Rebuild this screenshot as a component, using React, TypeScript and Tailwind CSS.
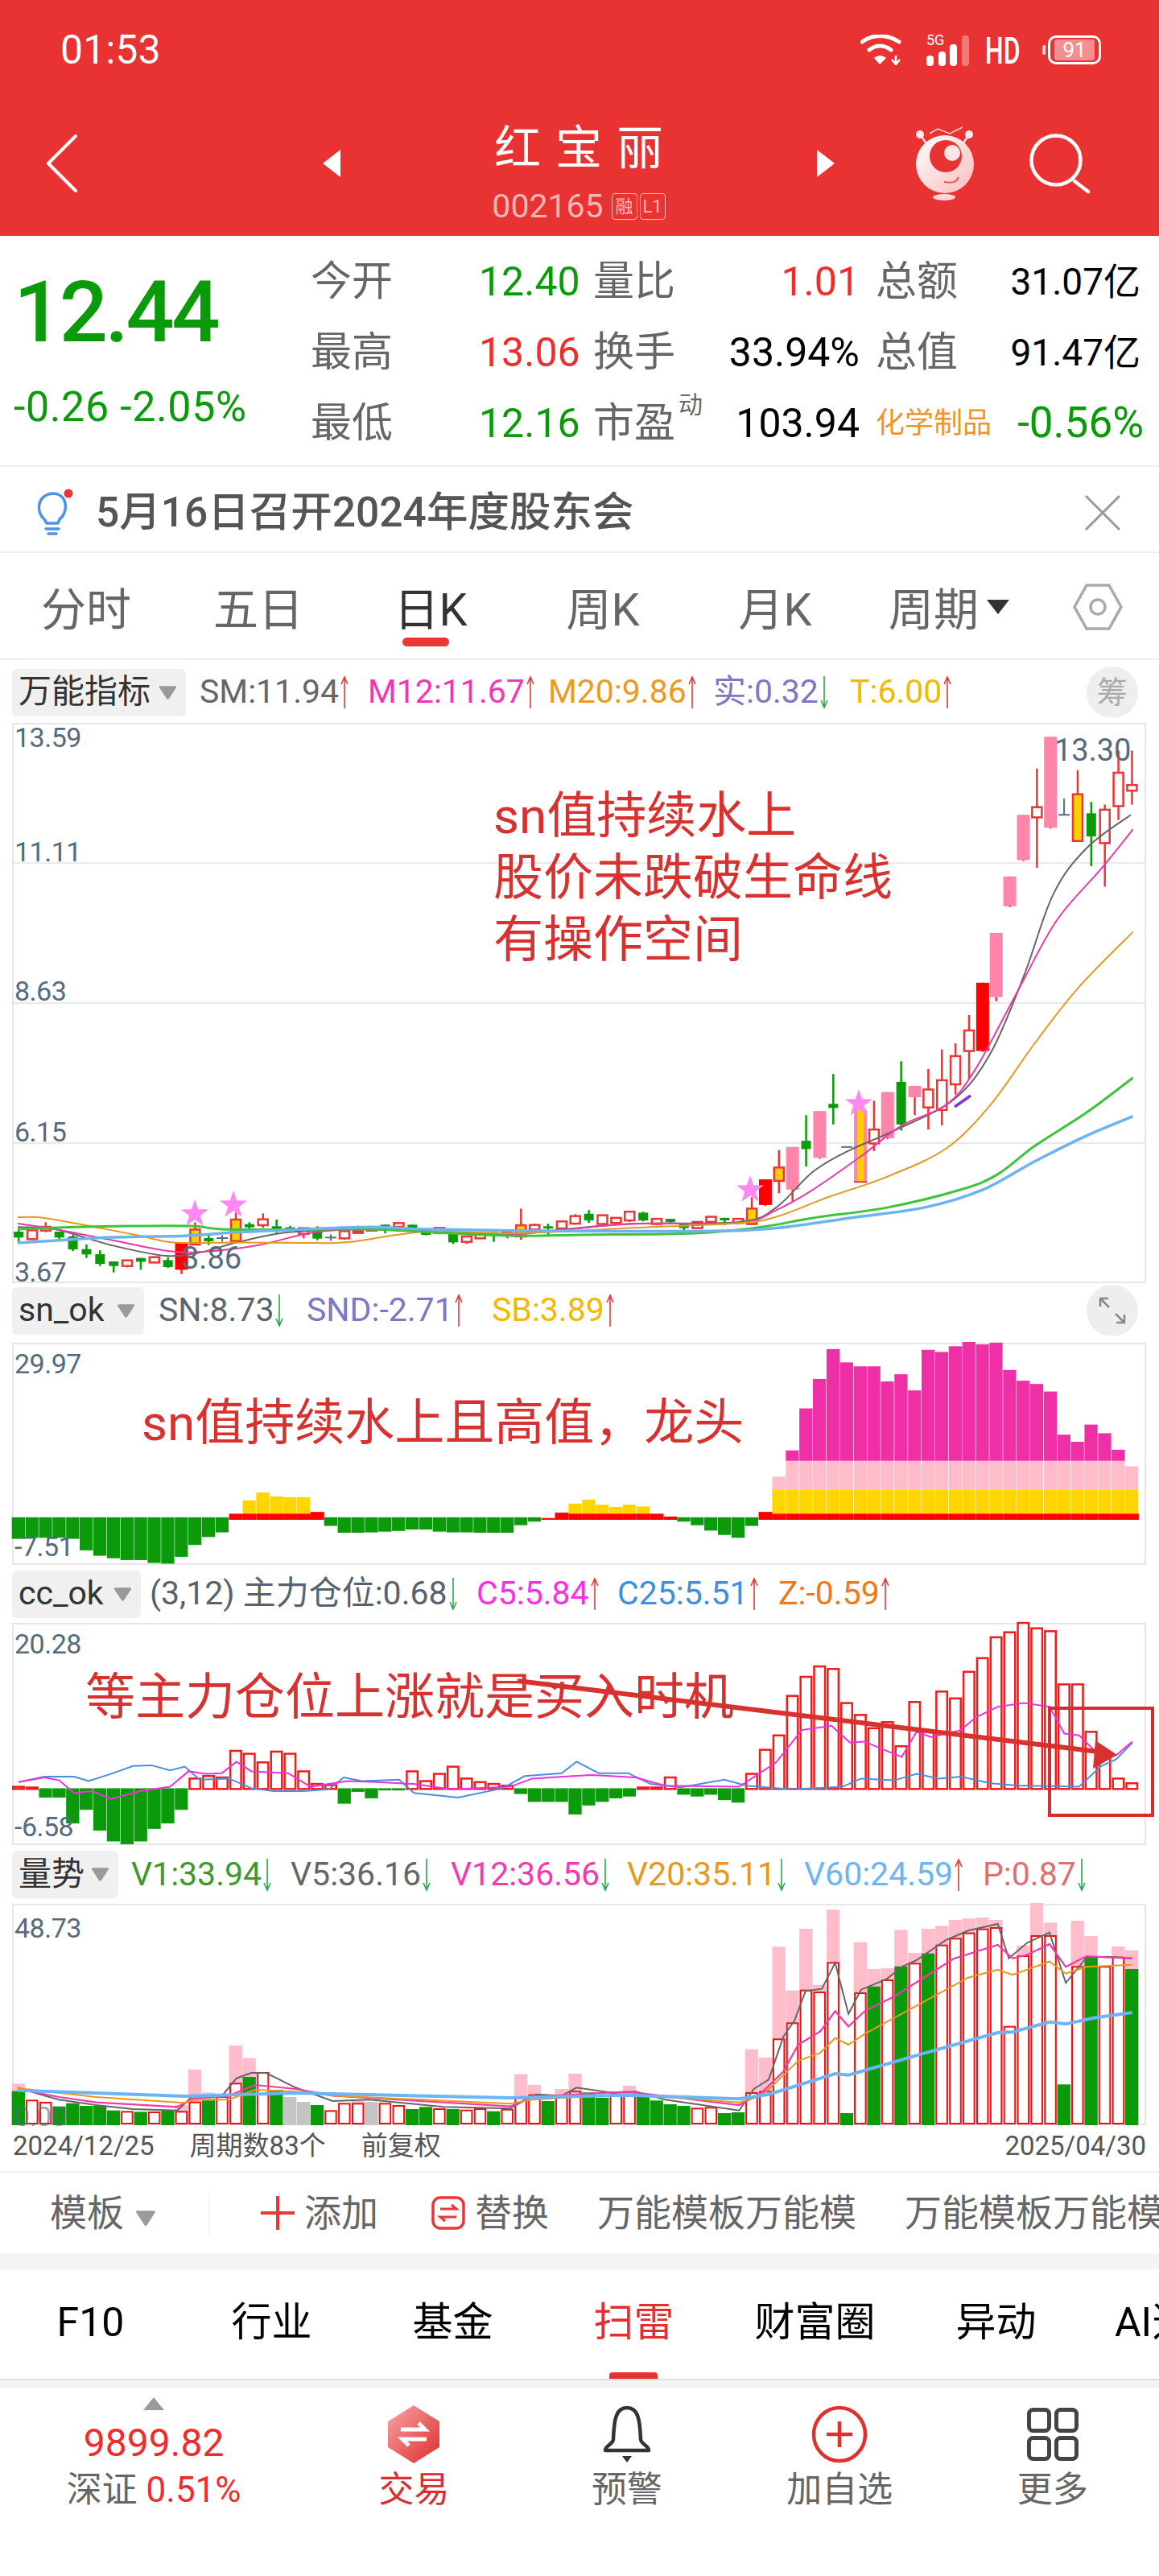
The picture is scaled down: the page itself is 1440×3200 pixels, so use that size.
import React from "react";

// pitch of one trading day on every chart, in page px
const X = (i: number) => 14.7 + 16.87 * i;
const RED = "#ee3535";
const GREEN = "#0a9a0a";

type CandleKind = "g" | "h" | "r" | "p" | "y" | "q" | "d";
type CandleRow = [CandleKind, number, number, number, number];

// kind, high, body top, body bottom, low
const candlesLeft: CandleRow[] = [
  ["g", 440, 450, 472, 488], ["h", 445, 445, 478, 478], ["h", 415, 432, 446, 452], ["g", 450, 450, 472, 478],
  ["g", 462, 468, 516, 522], ["g", 498, 515, 535, 548], ["g", 520, 534, 570, 578], ["g", 561, 561, 578, 602],
  ["h", 557, 557, 578, 583], ["g", 548, 548, 562, 592], ["h", 545, 545, 565, 568], ["g", 545, 556, 582, 585],
  ["r", 492, 492, 592, 608], ["y", 415, 442, 498, 500], ["g", 458, 474, 486, 500], ["d", 463, 474, 488, 488],
  ["y", 380, 405, 485, 487], ["g", 415, 422, 434, 445], ["h", 382, 404, 426, 436], ["g", 405, 430, 440, 455],
  ["g", 428, 434, 446, 448], ["h", 437, 437, 458, 475], ["g", 430, 448, 476, 482], ["d", 460, 472, 484, 484],
  ["h", 448, 448, 475, 480], ["h", 428, 448, 455, 457], ["h", 436, 436, 446, 448], ["g", 424, 424, 436, 456],
  ["h", 418, 418, 432, 436], ["g", 424, 424, 436, 438], ["g", 440, 440, 462, 464], ["h", 436, 436, 455, 460],
  ["g", 452, 452, 490, 496], ["h", 468, 468, 488, 495], ["h", 458, 458, 475, 477], ["g", 452, 452, 460, 488],
  ["h", 450, 450, 462, 475], ["y", 364, 426, 468, 480], ["h", 420, 425, 442, 446], ["g", 420, 430, 438, 462],
  ["h", 412, 412, 438, 452], ["h", 385, 392, 420, 424],
];

const candlesRight: CandleRow[] = [
  ["g", 1385, 1392, 1405, 1410], ["h", 1395, 1395, 1412, 1414], ["h", 1400, 1400, 1410, 1412], ["h", 1388, 1388, 1405, 1408],
  ["g", 1388, 1390, 1405, 1407], ["h", 1402, 1402, 1412, 1414], ["g", 1402, 1402, 1408, 1410], ["g", 1410, 1410, 1420, 1424],
  ["h", 1408, 1408, 1420, 1422], ["h", 1398, 1398, 1408, 1410], ["g", 1400, 1400, 1405, 1414], ["h", 1402, 1402, 1410, 1412],
  ["y", 1360, 1382, 1412, 1414], ["r", 1325, 1325, 1375, 1377], ["y", 1268, 1302, 1328, 1352], ["p", 1262, 1262, 1345, 1368],
  ["g", 1200, 1250, 1266, 1300], ["p", 1192, 1192, 1283, 1285], ["g", 1120, 1178, 1186, 1218], ["d", 1262, 1262, 1262, 1262],
  ["q", 1190, 1190, 1330, 1331], ["h", 1172, 1228, 1255, 1270], ["p", 1155, 1155, 1245, 1247], ["g", 1095, 1135, 1218, 1230],
  ["p", 1143, 1143, 1165, 1200], ["h", 1110, 1150, 1185, 1228], ["h", 1072, 1132, 1190, 1220], ["h", 1060, 1085, 1140, 1160],
  ["h", 1005, 1035, 1075, 1130], ["r", 942, 942, 1075, 1077], ["p", 845, 845, 970, 978], ["p", 735, 735, 793, 795],
  ["p", 615, 615, 703, 705], ["h", 525, 600, 620, 718], ["p", 463, 463, 640, 642], ["d", 583, 615, 615, 615],
  ["y", 528, 575, 666, 668], ["g", 590, 612, 657, 715], ["h", 595, 605, 670, 755], ["h", 490, 533, 598, 625],
  ["h", 490, 557, 568, 595],
];

const candles: CandleRow[] = [
  ...candlesLeft.map(([k, a, b, c, d]) => [k, 1380 + a / 3, 1380 + b / 3, 1380 + c / 3, 1380 + d / 3] as CandleRow),
  ...candlesRight.map(([k, a, b, c, d]) => [k, 620 + a / 1.568, 620 + b / 1.568, 620 + c / 1.568, 620 + d / 1.568] as CandleRow),
];

const line = (pts: number[][], fx: (v: number) => number, fy: (v: number) => number) =>
  pts.map(([x, y]) => `${fx(x).toFixed(1)},${fy(y).toFixed(1)}`).join(" ");

// moving averages on the price chart are smooth, catmull-rom through the points
const smooth = (raw: number[][], fx: (v: number) => number, fy: (v: number) => number) => {
  const p = raw.map(([x, y]) => [fx(x), fy(y)]);
  let d = `M${p[0][0].toFixed(1)} ${p[0][1].toFixed(1)}`;
  for (let i = 0; i < p.length - 1; i++) {
    const a = p[Math.max(i - 1, 0)];
    const b = p[i];
    const c = p[i + 1];
    const e = p[Math.min(i + 2, p.length - 1)];
    d += ` C${(b[0] + (c[0] - a[0]) / 6).toFixed(1)} ${(b[1] + (c[1] - a[1]) / 6).toFixed(1)} ${(c[0] - (e[0] - b[0]) / 6).toFixed(1)} ${(c[1] - (e[1] - b[1]) / 6).toFixed(1)} ${c[0].toFixed(1)} ${c[1].toFixed(1)}`;
  }
  return d;
};

const zx = (v: number) => v / 1.089;
const mainY = (v: number) => 620 + v / 1.568;
const snY = (v: number) => 1600 + v / 2.24;
const volY = (v: number) => 2280 + v / 3;

const maBlue = [[24,1449],[150,1438],[250,1435],[320,1428],[400,1423],[500,1418],[575,1422],[705,1425],[950,1426],[1050,1420],[1150,1400],[1250,1380],[1330,1345],[1400,1290],[1470,1240],[1533,1202]];
const maGreen = [[24,1422],[100,1418],[175,1416],[260,1416],[300,1422],[400,1423],[500,1422],[610,1430],[700,1435],[784,1433],[940,1430],[1030,1418],[1100,1400],[1200,1380],[1300,1345],[1350,1315],[1400,1260],[1470,1195],[1533,1127]];
const maOrange = [[24,1399],[60,1400],[125,1417],[190,1435],[235,1448],[325,1448],[425,1449],[475,1447],[575,1427],[700,1430],[850,1420],[1000,1410],[1050,1398],[1120,1360],[1200,1320],[1280,1265],[1340,1180],[1400,1060],[1460,950],[1533,843]];
const maPink = [[24,1411],[75,1422],[150,1443],[225,1464],[275,1466],[350,1453],[425,1428],[500,1422],[610,1430],[700,1432],[850,1412],[1000,1410],[1050,1385],[1100,1345],[1165,1280],[1220,1220],[1280,1180],[1320,1110],[1380,950],[1430,820],[1490,720],[1533,643]];
const maGray = [[24,1418],[75,1422],[150,1453],[225,1474],[275,1466],[320,1448],[390,1428],[500,1422],[610,1428],[700,1430],[850,1412],[1000,1408],[1050,1380],[1100,1310],[1150,1268],[1210,1230],[1290,1170],[1340,1080],[1385,930],[1425,770],[1470,680],[1530,615]];

const snGreen: Record<number, number> = { 0:698,1:695,2:695,3:695,4:698,5:730,6:745,7:752,8:757,9:757,10:765,11:767,12:748,13:715,14:693,15:680,23:662,24:681,25:681,26:680,27:678,28:676,29:672,30:672,31:678,32:680,33:680,34:681,35:681,36:681,37:660,38:650,49:650,50:660,51:675,52:687,53:695,54:662 };
const snRed: Record<number, number> = { 16:628,17:628,18:628,19:628,20:628,21:628,22:623,39:640,40:625,41:628,42:628,43:628,44:628,45:628,46:628,47:628,48:636,55:623 };
const snYellow: Record<number, number> = { 17:591,18:569,19:580,20:582,21:582,41:600,42:589,43:603,44:609,45:603,46:608 };
const snMagenta = [452,335,253,170,207,218,218,260,240,285,172,178,162,150,157,152,228,258,267,288,408,428,380,404,450];

const ccBars = [1388,1390,1418,1418,1490,1452,1510,1540,1548,1540,1505,1490,1452,1365,1358,1362,1288,1296,1320,1290,1296,1345,1380,1383,1435,1402,1420,1398,1398,1345,1372,1352,1332,1365,1375,1380,1385,1408,1430,1430,1430,1465,1440,1430,1420,1415,1390,1390,1362,1410,1415,1410,1425,1432,1352,1285,1245,1135,1082,1053,1060,1155,1188,1225,1208,1275,1152,1235,1123,1142,1068,1030,972,958,932,947,955,1103,1103,1235,1300,1365,1378];
const ccPink = [[25,1375],[60,1362],[80,1370],[100,1405],[125,1400],[150,1422],[190,1400],[230,1388],[255,1345],[280,1352],[300,1350],[320,1318],[340,1345],[390,1350],[420,1388],[470,1372],[510,1375],[560,1380],[610,1395],[690,1388],[720,1365],[775,1358],[800,1355],[860,1362],[900,1385],[1000,1388],[1050,1320],[1085,1230],[1125,1218],[1150,1265],[1170,1262],[1190,1280],[1220,1305],[1240,1235],[1260,1250],[1300,1230],[1320,1195],[1350,1165],[1385,1155],[1420,1165],[1440,1240],[1460,1245],[1480,1285],[1510,1300],[1532,1262]];
const ccBlue = [[25,1375],[60,1360],[100,1360],[120,1372],[150,1352],[180,1330],[205,1328],[230,1342],[250,1332],[270,1368],[310,1365],[340,1392],[370,1400],[410,1400],[445,1395],[465,1362],[490,1372],[540,1368],[560,1405],[620,1418],[680,1392],[710,1358],[760,1350],[780,1318],[810,1350],[850,1350],[880,1380],[920,1390],[980,1368],[1010,1385],[1070,1395],[1140,1388],[1165,1365],[1210,1370],[1240,1352],[1270,1365],[1300,1360],[1340,1378],[1380,1385],[1460,1388],[1490,1330],[1510,1312],[1532,1265]];

type VolKind = "g" | "h" | "s";
// pink top (0 = none), kind, top
const volBars: [number, VolKind, number][] = [
  [925,"g",953],[0,"h",988],[0,"h",996],[0,"g",1010],[0,"g",998],[0,"g",1008],[0,"g",1008],[0,"g",1025],[0,"h",1030],[0,"g",1030],
  [0,"h",1032],[0,"g",1025],[1005,"h",1030],[873,"h",995],[958,"g",988],[0,"h",975],[783,"h",925],[830,"g",900],[0,"h",885],[0,"g",948],
  [0,"s",975],[0,"s",993],[0,"g",1005],[0,"h",1027],[0,"h",1000],[990,"h",1000],[0,"s",993],[0,"h",1000],[0,"h",1008],[0,"g",1020],
  [0,"g",1012],[0,"h",1020],[0,"g",1020],[0,"h",1025],[0,"h",1020],[0,"g",1028],[0,"h",1022],[890,"h",980],[930,"h",968],[0,"g",990],
  [945,"h",975],[888,"h",955],[0,"g",958],[0,"g",978],[0,"h",965],[933,"h",965],[0,"g",975],[0,"g",988],[0,"g",1002],[0,"g",1008],
  [0,"h",1018],[0,"h",1015],[0,"g",1035],[0,"g",1032],[797,"h",960],[828,"h",955],[415,"h",760],[578,"h",700],[348,"h",578],[557,"h",585],
  [277,"h",475],[0,"g",1035],[398,"h",588],[498,"g",563],[495,"h",540],[352,"g",488],[438,"h",478],[348,"g",440],[337,"h",410],[315,"h",385],
  [310,"h",365],[306,"h",350],[315,"h",345],[0,"h",713],[410,"h",450],[252,"h",375],[325,"h",375],[0,"g",928],[318,"h",490],[375,"g",455],
  [0,"h",490],[414,"h",455],[428,"g",498],
];
const v5 = [[24,940],[60,970],[80,985],[130,1005],[180,1020],[240,1025],[262,968],[300,972],[320,905],[340,885],[360,885],[400,940],[450,990],[500,985],[600,1012],[690,1018],[725,965],[760,970],[780,940],[830,960],[860,955],[900,985],[1000,1025],[1020,945],[1040,910],[1060,750],[1075,690],[1090,580],[1112,572],[1130,475],[1148,665],[1165,575],[1200,535],[1220,490],[1240,465],[1280,390],[1310,355],[1350,330],[1365,458],[1390,400],[1420,362],[1442,550],[1470,455],[1500,452],[1532,458]];
const v12 = [[24,945],[80,975],[130,995],[240,1012],[262,980],[310,970],[345,930],[400,945],[450,970],[600,995],[690,1010],[720,975],[780,965],[850,955],[1000,1005],[1030,960],[1060,880],[1080,780],[1110,730],[1130,655],[1148,712],[1170,655],[1210,600],[1250,530],[1290,460],[1350,408],[1370,458],[1390,445],[1420,405],[1442,490],[1470,450],[1500,455],[1532,458]];
const v20 = [[24,942],[130,975],[250,997],[262,985],[310,985],[345,948],[400,955],[450,970],[690,1000],[720,985],[780,975],[850,965],[1000,995],[1030,970],[1050,920],[1080,840],[1110,810],[1130,755],[1148,780],[1170,740],[1210,680],[1270,590],[1310,530],[1350,500],[1370,520],[1420,470],[1442,515],[1470,490],[1532,482]];
const v60 = [[24,950],[130,960],[250,972],[400,960],[690,978],[850,968],[1000,982],[1040,965],[1130,888],[1148,893],[1240,820],[1350,735],[1370,733],[1420,695],[1442,703],[1480,680],[1532,660]];

function Star({ x, y }: { x: number; y: number }) {
  const pts = Array.from({ length: 10 }, (_, k) => {
    const r = k % 2 === 0 ? 18 : 7.2;
    const a = -Math.PI / 2 + (k * Math.PI) / 5;
    return `${(x + r * Math.cos(a)).toFixed(1)},${(y + r * Math.sin(a)).toFixed(1)}`;
  }).join(" ");
  return <polygon points={pts} fill="#ff88f2" />;
}

function Candle({ row, i }: { row: CandleRow; i: number }) {
  const [kind, hi, top, bot, lo] = row;
  const cx = X(i) + 8.4;
  if (kind === "d") {
    return (
      <g stroke="#5a6b7c" strokeWidth="2">
        <line x1={cx} x2={cx} y1={hi} y2={lo} />
        <line x1={cx - 7} x2={cx + 7} y1={top} y2={top} />
      </g>
    );
  }
  if (kind === "q") {
    // pink body with the yellow signal candle inside it
    return (
      <g>
        <rect x={cx - 8} y={top} width="16" height={bot - top} fill="#ff85aa" />
        <rect x={cx - 4} y={top} width="8" height={bot - top} fill="#ffd000" />
        <line x1={cx - 8} x2={cx + 8} y1={bot} y2={bot} stroke={RED} strokeWidth="2" />
      </g>
    );
  }
  const wick = kind === "g" ? GREEN : RED;
  const wide = kind === "r" || kind === "p";
  const w = wide ? 16 : 12;
  const fill = { g: GREEN, h: "#fff", r: "#ff0000", p: "#ff85aa", y: "#ffd000" }[kind];
  return (
    <g>
      <line x1={cx} x2={cx} y1={hi} y2={lo} stroke={wick} strokeWidth="2.5" />
      <rect
        x={cx - w / 2}
        y={top}
        width={w}
        height={Math.max(bot - top, 2)}
        fill={fill}
        stroke={kind === "h" || kind === "y" ? RED : "none"}
        strokeWidth="2.5"
      />
    </g>
  );
}

function Arrow({ up }: { up?: boolean }) {
  return (
    <svg width="12" height="42" viewBox="0 0 12 42" className="shrink-0 ml-[1px]">
      {up ? (
        <path d="M6 2 L6 41 M2 11 L6 2 L10 11" fill="none" stroke="#e23b3b" strokeWidth="1.6" />
      ) : (
        <path d="M6 1 L6 40 M2 31 L6 40 L10 31" fill="none" stroke="#2aa84a" strokeWidth="1.6" />
      )}
    </svg>
  );
}

function Caret({ className }: { className: string }) {
  return (
    <svg viewBox="0 0 24 18" className={className}>
      <path d="M2 3 Q1 1 3.5 1 L20.5 1 Q23 1 22 3 L13.5 16 Q12 18 10.5 16 Z" fill="#9a9a9a" />
    </svg>
  );
}

function IndicatorBox({ children, className }: { children: React.ReactNode; className: string }) {
  return (
    <div className={`flex items-center justify-between h-[59px] ml-[15px] pl-[8px] pr-[10px] bg-[#f0f0f0] rounded-[6px] shrink-0 ${className}`}>
      <span className="text-[41px] text-[#333]">{children}</span>
      <Caret className="w-[25px] h-[19px]" />
    </div>
  );
}

function Stat({ text, up, className }: { text: string; up?: boolean; className: string }) {
  return (
    <div className={`flex items-center whitespace-nowrap shrink-0 text-[41px] ${className}`}>
      <span>{text}</span>
      <Arrow up={up} />
    </div>
  );
}

function AxisLabel({ children, className }: { children: React.ReactNode; className: string }) {
  return <span className={`absolute left-[3px] text-[34px] tracking-[-0.5px] leading-none text-[#556a7d] ${className}`}>{children}</span>;
}

function StatusBar() {
  return (
    <div className="flex items-center h-[124px] pl-[75px] text-white">
      <span className="w-[125px] text-[50px] leading-none">01:53</span>
      <svg width="52" height="38" viewBox="0 0 52 38" className="ml-[869px] shrink-0">
        <path d="M2 9 Q24 -6 48 9" fill="none" stroke="#fff" strokeWidth="5" strokeLinecap="round" />
        <path d="M11 19 Q24 9 38 19" fill="none" stroke="#fff" strokeWidth="5" strokeLinecap="round" />
        <path d="M17 29 Q24 23 32 29 L24 37 Z" fill="#fff" />
        <path d="M44 26 L44 36 M39 31 L44 37 L49 31" fill="none" stroke="#fff" strokeWidth="2.5" />
      </svg>
      <div className="relative w-[53px] h-[40px] ml-[30px] shrink-0">
        <span className="absolute left-0 top-[-1px] text-[18px] leading-none">5G</span>
        <div className="absolute inset-0 flex items-end gap-[5.5px]">
          <div className="w-[9px] h-[13px] bg-white rounded-[4px]" />
          <div className="w-[9px] h-[18px] bg-white rounded-[4px]" />
          <div className="w-[9px] h-[27px] bg-white rounded-[4px]" />
          <div className="w-[9px] h-[38px] bg-white/35 rounded-[4px]" />
        </div>
      </div>
      <span className="block w-[45px] ml-[20px] text-[47px] leading-none font-medium scale-x-[0.68] origin-left">HD</span>
      <div className="flex items-center ml-[26px] shrink-0">
        <div className="w-[4px] h-[12px] bg-white/80 rounded-l-[3px]" />
        <div className="w-[66px] h-[36px] ml-[3px] border-[3px] border-white rounded-[10px] flex items-center px-[5px] py-[2px]">
          <div className="w-full h-full bg-white/45 rounded-[3px] flex items-center justify-center text-[26px] leading-none">91</div>
        </div>
      </div>
    </div>
  );
}

function Mascot() {
  return (
    <svg width="74" height="92" viewBox="0 0 74 92" className="shrink-0">
      <defs>
        <linearGradient id="mascotBody" x1="0" y1="0" x2="1" y2="1">
          <stop offset="0" stopColor="#ffffff" />
          <stop offset="1" stopColor="#fbbcbc" />
        </linearGradient>
      </defs>
      <path d="M17 9 L27 3 L42 9 L58 1" fill="none" stroke="#ffd5d5" strokeWidth="1.5" />
      <path d="M5 10 L15 24 M66 10 L58 22" stroke="#ffe0e0" strokeWidth="2.5" />
      <circle cx="5" cy="10" r="5" fill="#ffeaea" />
      <circle cx="66" cy="10" r="5" fill="#ffeaea" />
      <circle cx="36" cy="47" r="36" fill="url(#mascotBody)" />
      <circle cx="37" cy="37" r="20" fill="#e93333" />
      <circle cx="45" cy="33" r="10" fill="#ffe5e5" />
      <path d="M35 69 Q50 72 53 63" fill="none" stroke="#ee5555" strokeWidth="2" />
      <ellipse cx="35" cy="88" rx="14" ry="4" fill="#ffd5d5" />
    </svg>
  );
}

function NavBar() {
  return (
    <div className="flex items-center h-[169px] pb-[12px] text-white">
      <svg width="40" height="72" viewBox="0 0 40 72" className="ml-[57px] shrink-0">
        <path d="M37 2 L3 36 L37 70" fill="none" stroke="#fff" strokeWidth="4" strokeLinecap="round" strokeLinejoin="round" />
      </svg>
      <svg width="24" height="36" viewBox="0 0 24 36" className="ml-[303px] shrink-0">
        <path d="M23 1 L1 18 L23 35 Z" fill="#fff" />
      </svg>
      <div className="w-[590px] pt-[26px] flex flex-col items-center">
        <span className="text-[58px] leading-[60px] tracking-[18px] pl-[18px]">红宝丽</span>
        <div className="flex items-center mt-[22px] text-[#f9b6b6]">
          <span className="text-[41px] leading-none">002165</span>
          <span className="ml-[10px] w-[32px] h-[33px] border border-[#f9b6b6] rounded-[4px] text-[22px] leading-[31px] text-center">融</span>
          <span className="ml-[3px] w-[32px] h-[33px] border border-[#f9b6b6] rounded-[4px] text-[22px] leading-[31px] text-center">L1</span>
        </div>
      </div>
      <svg width="24" height="36" viewBox="0 0 24 36" className="shrink-0">
        <path d="M1 1 L23 18 L1 35 Z" fill="#fff" />
      </svg>
      <div className="ml-[100px]">
        <Mascot />
      </div>
      <svg width="76" height="76" viewBox="0 0 76 76" className="ml-[67px] shrink-0">
        <circle cx="33" cy="34" r="30.5" fill="none" stroke="#fff" strokeWidth="4.5" />
        <path d="M56 60 L73 73" stroke="#fff" strokeWidth="4.5" strokeLinecap="round" />
      </svg>
    </div>
  );
}

const quoteRows = [
  { l1: "今开", v1: "12.40", c1: "text-[#0a9a0a]", l2: "量比", v2: "1.01", c2: "text-[#f02c2c]", l3: "总额", v3: "31.07亿" },
  { l1: "最高", v1: "13.06", c1: "text-[#f02c2c]", l2: "换手", v2: "33.94%", c2: "text-black", l3: "总值", v3: "91.47亿" },
];

function QuotePanel() {
  return (
    <div className="flex h-[287px] border-b-2 border-[#eeeeee] bg-white">
      <div className="w-[386px] shrink-0">
        <div className="pl-[17px] pt-[42px] text-[106px] tracking-[-3.5px] leading-[106px] font-medium text-[#0a9a0a]">12.44</div>
        <div className="pl-[17px] pt-[40px] text-[52px] tracking-[0.6px] leading-[50px] text-[#0a9a0a] whitespace-nowrap">-0.26 -2.05%</div>
      </div>
      <div className="pt-[13px]">
        {quoteRows.map((r) => (
          <div key={r.l1} className="flex items-center h-[88px]">
            <span className="w-[209px] text-[51px] text-[#666]">{r.l1}</span>
            <span className={`w-[142px] text-[50px] ${r.c1}`}>{r.v1}</span>
            <span className="w-[110px] text-[51px] text-[#666]">{r.l2}</span>
            <span className={`w-[221px] text-right text-[50px] ${r.c2}`}>{r.v2}</span>
            <span className="w-[140px] ml-[20px] text-[51px] text-[#666]">{r.l3}</span>
            <span className="w-[189px] text-right text-[46px] text-black">{r.v3}</span>
          </div>
        ))}
        <div className="flex items-center h-[88px]">
          <span className="w-[209px] text-[51px] text-[#666]">最低</span>
          <span className="w-[142px] text-[50px] text-[#0a9a0a]">12.16</span>
          <span className="relative w-[110px] text-[51px] text-[#666]">
            市盈
            <span className="absolute left-[106px] top-[0px] text-[30px] leading-none">动</span>
          </span>
          <span className="w-[221px] text-right text-[50px] text-black">103.94</span>
          <span className="w-[144px] ml-[20px] text-[36px] text-[#f0932b]">化学制品</span>
          <span className="w-[189px] text-right text-[53px] text-[#0a9a0a]">-0.56%</span>
        </div>
      </div>
    </div>
  );
}

function NoticeBar() {
  return (
    <div className="flex items-center h-[107px] pt-[8px] border-b-2 border-[#eeeeee]">
      <svg width="52" height="60" viewBox="0 0 52 60" className="ml-[41px] shrink-0">
        <path d="M14 38 C4 30 4 8 24 6 C44 6 44 30 33 38 L31 43 L17 43 Z" fill="none" stroke="#4d94e8" strokeWidth="3.5" strokeLinejoin="round" />
        <path d="M16 50 L32 50 M19 56 L29 56" stroke="#4d94e8" strokeWidth="3.5" strokeLinecap="round" />
        <circle cx="44" cy="6" r="5.5" fill="#ee3535" />
      </svg>
      <span className="ml-[26px] text-[51.5px] font-medium text-[#555] whitespace-nowrap">5月16日召开2024年度股东会</span>
      <svg width="46" height="46" viewBox="0 0 46 46" className="ml-[560px] shrink-0">
        <path d="M2 2 L44 44 M44 2 L2 44" stroke="#999" strokeWidth="3" />
      </svg>
    </div>
  );
}

function PeriodTabs() {
  const tabs = ["分时", "五日", "日K", "周K", "月K"];
  return (
    <div className="flex items-center h-[133px] pt-[10px] border-b-2 border-[#eeeeee]">
      {tabs.map((t) => (
        <div key={t} className={`relative w-[214px] text-center text-[56px] ${t === "日K" ? "text-[#333]" : "text-[#666]"}`}>
          {t}
          {t === "日K" && <div className="absolute left-[72px] top-[76px] w-[58px] h-[11px] bg-[#ee3535] rounded-full" />}
        </div>
      ))}
      <div className="flex items-center w-[214px] pl-[34px] text-[56px] text-[#666]">
        周期
        <svg width="28" height="18" viewBox="0 0 28 18" className="ml-[10px] mb-[8px]">
          <path d="M0 0 L28 0 L14 18 Z" fill="#333" />
        </svg>
      </div>
      <svg width="62" height="60" viewBox="0 0 62 60" className="ml-[49px] mb-[8px]">
        <path d="M17 3 L45 3 L60 30 L45 57 L17 57 L2 30 Z" fill="none" stroke="#aaa" strokeWidth="3.5" strokeLinejoin="round" />
        <circle cx="31" cy="30" r="9" fill="none" stroke="#aaa" strokeWidth="3.5" />
      </svg>
    </div>
  );
}

function MainChart() {
  const h = 696;
  return (
    <div className="relative ml-[15px] w-[1409px] h-[696px] shadow-[inset_0_0_0_2px_#e6e6e6]">
      <svg viewBox={`15 898 1409 ${h}`} width="1409" height={h} className="block overflow-visible">
        {[1072, 1246, 1420].map((y) => (
          <line key={y} x1="15" x2="1424" y1={y} y2={y} stroke="#e3e3e3" strokeWidth="1.5" />
        ))}
        {candles.map((row, i) => (
          <Candle key={i} row={row} i={i} />
        ))}
        <path d={smooth(maGray, zx, mainY)} fill="none" stroke="#666" strokeWidth="2" />
        <path d={smooth(maPink, zx, mainY)} fill="none" stroke="#ea3aa8" strokeWidth="2" />
        <path d={smooth(maOrange, zx, mainY)} fill="none" stroke="#e39a1f" strokeWidth="2" />
        <path d={smooth(maGreen, zx, mainY)} fill="none" stroke="#3cc43c" strokeWidth="3" />
        <path d={smooth(maBlue, zx, mainY)} fill="none" stroke="#6cb4f0" strokeWidth="3.5" />
        <line x1="1186" y1="1375" x2="1206" y2="1361" stroke="#9030d8" strokeWidth="3.5" />
        <Star x={242} y={1508} />
        <Star x={290} y={1497} />
        <Star x={932} y={1478} />
        <Star x={1067} y={1371} />
      </svg>
      <AxisLabel className="top-[1px]">13.59</AxisLabel>
      <AxisLabel className="top-[143px]">11.11</AxisLabel>
      <AxisLabel className="top-[316px]">8.63</AxisLabel>
      <AxisLabel className="top-[491px]">6.15</AxisLabel>
      <AxisLabel className="top-[665px]">3.67</AxisLabel>
      <span className="absolute left-[211px] top-[646px] text-[38px] leading-none text-[#556a7d]">3.86</span>
      <span className="absolute left-[1295px] top-[15px] text-[38px] leading-none text-[#556a7d]">13.30</span>
      <div className="absolute left-[598px] top-[77px] text-[62px] leading-[77px] text-[#d8312f] whitespace-nowrap">
        sn值持续水上
        <br />
        股价未跌破生命线
        <br />
        有操作空间
      </div>
    </div>
  );
}

function SnChart() {
  return (
    <div className="relative ml-[15px] w-[1409px] h-[276px] shadow-[inset_0_0_0_2px_#e6e6e6]">
      <svg viewBox="15 1668 1409 276" width="1409" height="276" className="block overflow-visible">
        {Object.entries(snGreen).map(([i, b]) => (
          <rect key={i} x={X(+i)} y={snY(638)} width="16.3" height={snY(b) - snY(638)} fill={GREEN} />
        ))}
        {Object.entries(snYellow).map(([i, t]) => (
          <rect key={i} x={X(+i)} y={snY(t)} width="16.3" height={snY(628) - snY(t)} fill="#ffd500" />
        ))}
        {Array.from({ length: 27 }, (_, k) => k + 56).map((i) => {
          const pinkTop = i === 56 ? 525 : i === 82 ? 496 : 481;
          return (
            <g key={i}>
              <rect x={X(i)} y={snY(pinkTop)} width="16.3" height={snY(562) - snY(pinkTop)} fill="#ffbccb" />
              <rect x={X(i)} y={snY(562)} width="16.3" height={snY(628) - snY(562)} fill="#ffd500" />
              <rect x={X(i)} y={snY(628)} width="16.87" height={snY(645) - snY(628)} fill="#ff0000" />
            </g>
          );
        })}
        {Object.entries(snRed).map(([i, t]) => (
          <rect key={i} x={X(+i)} y={snY(t)} width="16.87" height={snY(645) - snY(t)} fill="#ff0000" />
        ))}
        {snMagenta.map((t, k) => (
          <rect key={k} x={X(k + 57)} y={snY(t)} width="16.3" height={snY(481) - snY(t)} fill="#ee2fa5" />
        ))}
      </svg>
      <AxisLabel className="top-[9px]">29.97</AxisLabel>
      <AxisLabel className="top-[236px]">-7.51</AxisLabel>
      <div className="absolute left-[161px] top-[62px] text-[62px] leading-[76px] text-[#d8312f] whitespace-nowrap">
        sn值持续水上且高值，龙头
      </div>
    </div>
  );
}

function CcChart() {
  return (
    <div className="relative ml-[15px] w-[1409px] h-[276px] shadow-[inset_0_0_0_2px_#e6e6e6]">
      <svg viewBox="15 2016 1409 276" width="1409" height="276" className="block overflow-visible">
        {ccBars.map((t, i) =>
          t > 1392 ? (
            <rect key={i} x={X(i)} y={snY(1392)} width="16.3" height={snY(t) - snY(1392)} fill={GREEN} />
          ) : (
            <rect key={i} x={X(i) + 1.5} y={snY(t)} width="13.5" height={snY(1394) - snY(t)} fill="#fff" stroke="#ee1c1c" strokeWidth="2.5" />
          ),
        )}
        <polyline points={line(ccBlue, zx, snY)} fill="none" stroke="#4a90d9" strokeWidth="2" />
        <polyline points={line(ccPink, zx, snY)} fill="none" stroke="#f02fe0" strokeWidth="2" />
        <line x1="643" y1="2088" x2="1365" y2="2176" stroke="#d7322f" strokeWidth="6" />
        <path d="M1388 2180 L1361 2162 L1358 2197 Z" fill="#d7322f" />
        <rect x="1304" y="2122" width="128" height="133" fill="none" stroke="#d22f2c" strokeWidth="4" />
      </svg>
      <AxisLabel className="top-[9px]">20.28</AxisLabel>
      <AxisLabel className="top-[236px]">-6.58</AxisLabel>
      <div className="absolute left-[91px] top-[55px] text-[62px] leading-[76px] text-[#d8312f] whitespace-nowrap">
        等主力仓位上涨就是买入时机
      </div>
    </div>
  );
}

function VolChart() {
  return (
    <div className="relative ml-[15px] w-[1409px] h-[275px] shadow-[inset_0_0_0_2px_#e6e6e6]">
      <svg viewBox="15 2365 1409 275" width="1409" height="275" className="block overflow-visible">
        {volBars.map(([pink, kind, top], i) => {
          const base = volY(1080);
          return (
            <g key={i}>
              {pink > 0 && <rect x={X(i)} y={volY(pink)} width="16.3" height={base - volY(pink)} fill="#ffbccb" />}
              {kind === "g" && <rect x={X(i)} y={volY(top)} width="16.3" height={base - volY(top)} fill={GREEN} />}
              {kind === "s" && <rect x={X(i)} y={volY(top)} width="16.3" height={base - volY(top)} fill="#c4c4c4" />}
              {kind === "h" && (
                <rect x={X(i) + 1.5} y={volY(top)} width="13.5" height={base - volY(top) - 2} fill="#fff" stroke="#ee1010" strokeWidth="2" />
              )}
            </g>
          );
        })}
        <polyline points={line(v5, zx, volY)} fill="none" stroke="#666" strokeWidth="2" />
        <polyline points={line(v12, zx, volY)} fill="none" stroke="#f03aa8" strokeWidth="2.2" />
        <polyline points={line(v20, zx, volY)} fill="none" stroke="#e8981c" strokeWidth="2" />
        <polyline points={line(v60, zx, volY)} fill="none" stroke="#6cb4f5" strokeWidth="4" />
      </svg>
      <AxisLabel className="top-[13px]">48.73</AxisLabel>
      <AxisLabel className="top-[247px] opacity-60">0.00</AxisLabel>
    </div>
  );
}

function TemplateRow() {
  const boxes = ["万能模板万能模", "万能模板万能模"];
  return (
    <div className="flex items-center h-[102px] border-t-2 border-[#eeeeee] overflow-hidden text-[46px] text-[#666] whitespace-nowrap">
      <span className="ml-[62px]">模板</span>
      <Caret className="ml-[13px] mt-[12px] w-[28px] h-[21px] shrink-0" />
      <div className="ml-[64px] w-[1px] h-[53px] bg-[#eeeeee] shrink-0" />
      <svg width="42" height="42" viewBox="0 0 42 42" className="ml-[64px] shrink-0">
        <path d="M21 0 L21 42 M0 21 L42 21" stroke="#ee3535" strokeWidth="4" />
      </svg>
      <span className="ml-[12px]">添加</span>
      <svg width="42" height="42" viewBox="0 0 42 42" className="ml-[66px] shrink-0">
        <rect x="2" y="2" width="38" height="38" rx="9" fill="none" stroke="#ee3535" strokeWidth="3.5" />
        <path d="M11 16 L31 16 L25 11 M31 26 L11 26 L17 31" fill="none" stroke="#ee3535" strokeWidth="3" />
      </svg>
      <span className="ml-[12px]">替换</span>
      <span className="ml-[60px]">{boxes[0]}</span>
      <span className="ml-[60px]">{boxes[1]}</span>
    </div>
  );
}

function InfoTabs() {
  const tabs = ["F10", "行业", "基金", "扫雷", "财富圈", "异动"];
  return (
    <div className="relative flex items-center h-[138px] pb-[4px] border-b-2 border-[#dddddd] overflow-hidden">
      {tabs.map((t) => (
        <span key={t} className={`shrink-0 w-[225px] text-center text-[50px] ${t === "扫雷" ? "text-[#e23030]" : "text-black"}`}>
          {t}
        </span>
      ))}
      <span className="shrink-0 pl-[35px] text-[50px] text-black whitespace-nowrap">AI选</span>
      <div className="absolute left-[675px] bottom-0 w-[225px] h-[4px] bg-white" />
      <div className="absolute left-[757px] bottom-0 w-[60px] h-[8px] bg-[#e83232] rounded-t-[4px]" />
    </div>
  );
}

function BottomItem({ label, active, children }: { label: string; active?: boolean; children: React.ReactNode }) {
  return (
    <div className="w-[265px] flex flex-col items-center pt-[21px]">
      {children}
      <span className={`mt-[8px] text-[44px] leading-[50px] ${active ? "text-[#d63030]" : "text-[#666]"}`}>{label}</span>
    </div>
  );
}

function BottomBar() {
  return (
    <div className="flex h-[233px] bg-white">
      <div className="w-[383px] flex flex-col items-center pt-[11px] leading-none">
        <svg width="26" height="16" viewBox="0 0 26 16">
          <path d="M13 0 L26 16 L0 16 Z" fill="#9a9a9a" />
        </svg>
        <span className="mt-[17px] text-[48px] text-[#f02c2c]">9899.82</span>
        <div className="mt-[12px] text-[44px] text-[#666] whitespace-nowrap">
          深证 <span className="text-[#f02c2c]">0.51%</span>
        </div>
      </div>
      <BottomItem label="交易" active>
        <svg width="64" height="72" viewBox="0 0 64 72">
          <defs>
            <linearGradient id="tradeFill" x1="0" y1="0" x2="1" y2="1">
              <stop offset="0" stopColor="#f7a5a5" />
              <stop offset="1" stopColor="#e02c2c" />
            </linearGradient>
          </defs>
          <path d="M32 0 L64 20 L64 52 L32 72 L0 52 L0 20 Z" fill="url(#tradeFill)" />
          <path d="M16 30 L46 30 L38 22 M48 42 L18 42 L26 50" fill="none" stroke="#fff" strokeWidth="5" />
        </svg>
      </BottomItem>
      <BottomItem label="预警">
        <svg width="60" height="72" viewBox="0 0 60 72">
          <path d="M30 3 C16 3 14 18 13 42 C13 48 3 50 3 56 L57 56 C57 50 47 48 47 42 C46 18 44 3 30 3 Z" fill="none" stroke="#333" strokeWidth="4.5" strokeLinejoin="round" />
          <path d="M24 63 L36 63 L30 71 Z" fill="#333" />
        </svg>
      </BottomItem>
      <BottomItem label="加自选">
        <svg width="70" height="72" viewBox="0 0 70 72">
          <ellipse cx="35" cy="36" rx="32" ry="33" fill="none" stroke="#e23030" strokeWidth="4.5" />
          <path d="M35 20 L35 52 M19 36 L51 36" stroke="#e23030" strokeWidth="4.5" />
        </svg>
      </BottomItem>
      <BottomItem label="更多">
        <svg width="64" height="66" viewBox="0 0 64 66" className="mt-[3px] mb-[3px]">
          <rect x="2.5" y="2.5" width="25" height="26" rx="5" fill="none" stroke="#444" strokeWidth="5" />
          <rect x="36.5" y="2.5" width="25" height="26" rx="5" fill="none" stroke="#444" strokeWidth="5" />
          <rect x="2.5" y="37.5" width="25" height="26" rx="5" fill="none" stroke="#444" strokeWidth="5" />
          <rect x="36.5" y="37.5" width="25" height="26" rx="5" fill="none" stroke="#444" strokeWidth="5" />
        </svg>
      </BottomItem>
    </div>
  );
}

export default function App() {
  return (
    <div className="w-[1440px] h-[3200px] overflow-hidden bg-white font-['Roboto','Noto_Sans_CJK_SC',sans-serif]">
      <div className="bg-[#e93333] h-[293px]">
        <StatusBar />
        <NavBar />
      </div>
      <QuotePanel />
      <NoticeBar />
      <PeriodTabs />

      <div className="flex items-center h-[78px] pt-[2px]">
        <IndicatorBox className="w-[216px]">万能指标</IndicatorBox>
        <Stat className="ml-[17px] w-[209px] text-[#666]" text="SM:11.94" up />
        <Stat className="w-[224px] text-[#f536b4]" text="M12:11.67" up />
        <Stat className="w-[205px] text-[#ee9a1c]" text="M20:9.86" up />
        <Stat className="w-[170px] text-[#7b78c8]" text="实:0.32" />
        <Stat className="text-[#f5b800]" text="T:6.00" up />
        <div className="ml-auto mr-[26px] w-[64px] h-[64px] rounded-full bg-[#eeeeee] flex items-center justify-center text-[38px] text-[#aaa]">筹</div>
      </div>
      <MainChart />

      <div className="flex items-center h-[74px] pb-[6px]">
        <IndicatorBox className="w-[164px]">sn_ok</IndicatorBox>
        <Stat className="ml-[18px] w-[184px] text-[#5c6670]" text="SN:8.73" />
        <Stat className="w-[230px] text-[#7b78c8]" text="SND:-2.71" up />
        <Stat className="text-[#f5b800]" text="SB:3.89" up />
        <div className="ml-auto mr-[26px] w-[64px] h-[64px] rounded-full bg-[#eeeeee] flex items-center justify-center">
          <svg width="34" height="34" viewBox="0 0 34 34">
            <path d="M2 12 L2 2 L12 2 M2 2 L13 13 M32 22 L32 32 L22 32 M32 32 L21 21" fill="none" stroke="#888" strokeWidth="2.5" />
          </svg>
        </div>
      </div>
      <SnChart />

      <div className="flex items-center h-[72px]">
        <IndicatorBox className="w-[160px]">cc_ok</IndicatorBox>
        <Stat className="ml-[11px] w-[406px] text-[#566270]" text="(3,12) 主力仓位:0.68" />
        <Stat className="w-[175px] text-[#ff2ee6]" text="C5:5.84" up />
        <Stat className="w-[200px] text-[#3f8fe0]" text="C25:5.51" up />
        <Stat className="text-[#f07a1a]" text="Z:-0.59" up />
      </div>
      <CcChart />

      <div className="flex items-center h-[73px]">
        <IndicatorBox className="w-[132px]">量势</IndicatorBox>
        <Stat className="ml-[16px] w-[198px] text-[#3c9a28]" text="V1:33.94" />
        <Stat className="w-[199px] text-[#666]" text="V5:36.16" />
        <Stat className="w-[219px] text-[#f03cb0]" text="V12:36.56" />
        <Stat className="w-[220px] text-[#e8981c]" text="V20:35.11" />
        <Stat className="w-[222px] text-[#6cb4f5]" text="V60:24.59" up />
        <Stat className="text-[#e07070]" text="P:0.87" />
      </div>
      <VolChart />

      <div className="flex items-center h-[57px] text-[33px] text-[#555] pb-[6px] whitespace-nowrap">
        <span className="ml-[16px]">2024/12/25</span>
        <span className="ml-[44px]">周期数83个</span>
        <span className="ml-[44px]">前复权</span>
        <span className="ml-auto mr-[16px]">2025/04/30</span>
      </div>

      <TemplateRow />
      <div className="h-[20px] bg-[#f4f4f4]" />
      <InfoTabs />
      <div className="h-[10px] bg-[#f4f4f4]" />
      <BottomBar />
    </div>
  );
}
